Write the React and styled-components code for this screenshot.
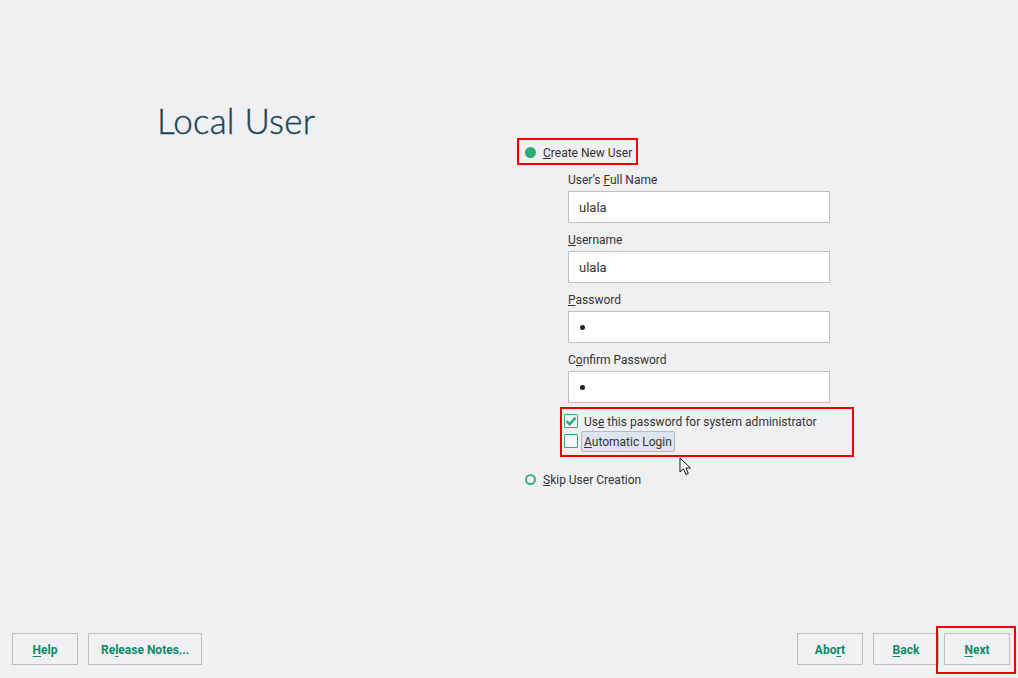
import React from 'react'

// Components
import styled, { createGlobalStyle } from 'styled-components'

const GlobalStyle = createGlobalStyle`
  html, body {
    margin: 0;
    padding: 0;
    background: #f0f0f3;
    font-family: Roboto, 'Liberation Sans', sans-serif;
    color: #333333;
  }
`

const Page = styled.div`
  position: relative;
  display: flex;
  flex-direction: column;
  height: 100vh;
  overflow: hidden;
`

const Main = styled.main`
  flex: 1;
  display: flex;
  align-items: flex-start;
`

const Title = styled.h1`
  margin: 100px 0 0 157px;
  width: 360px;
  font-family: Lato, 'Open Sans', sans-serif;
  font-weight: 300;
  font-size: 35px;
  line-height: 40px;
  letter-spacing: 0.2px;
  color: #1c4556;
  -webkit-text-stroke: 0.4px #1c4556;
`

const Form = styled.div`
  display: flex;
  flex-direction: column;
  align-items: flex-start;
  margin-top: 138px;
  font-size: 12px;
`

const RadioRow = styled.label`
  display: inline-flex;
  align-items: center;
  gap: 7px;
  box-sizing: border-box;
  height: 27px;
  padding: 1px 4px 0 6px;
  margin-top: ${p => p.gapTop || 0}px;
  border: 2px solid ${p => (p.marked ? '#ee0000' : 'transparent')};
  line-height: 16px;
`

const RadioText = styled.span`
  padding-top: 2px;
`

const RadioDot = styled.span`
  box-sizing: border-box;
  width: 11px;
  height: 11px;
  border-radius: 50%;
  background: ${p => (p.checked ? '#2aac72' : 'transparent')};
  border: 2px solid ${p => (p.checked ? '#2aac72' : '#38b486')};
`

const Fields = styled.div`
  display: flex;
  flex-direction: column;
  gap: 8px;
  margin: 6px 0 0 51px;
`

const Field = styled.div`
  display: flex;
  flex-direction: column;
`

const Label = styled.span`
  line-height: 16px;
  padding-top: 1px;
  margin-bottom: 3px;
`

const Input = styled.div`
  box-sizing: border-box;
  width: 262px;
  height: 32px;
  display: flex;
  align-items: center;
  padding: 1px 0 0 10px;
  background: #ffffff;
  border: 1px solid #bfbfbf;
  font-size: 13px;
  color: #333333;
`

const Dot = styled.span`
  display: block;
  width: 5px;
  height: 5px;
  margin-left: 1px;
  border-radius: 50%;
  background: #222222;
`

const CheckGroup = styled.div`
  box-sizing: border-box;
  width: 294px;
  margin: 4px 0 0 43px;
  padding: 2px 0 4px 2px;
  border: 2px solid #ee0000;
`

const CheckRow = styled.label`
  display: flex;
  align-items: center;
  gap: 6px;
  height: 20px;
`

const Box = styled.span`
  box-sizing: border-box;
  display: flex;
  align-items: center;
  justify-content: center;
  width: 14px;
  height: 14px;
  border: 1px solid #35a87c;
  border-radius: 1px;
  background: #f6f6f8;
`

const CheckText = styled.span`
  line-height: 16px;
  padding-top: 2px;
  ${p =>
    p.focused &&
    `
    margin-left: -3px;
    padding: 2px 2px 1px 2px;
    background: #dde5ee;
    border: 1px solid #a9bccc;
    border-radius: 2px;
  `}
`

const Footer = styled.footer`
  display: flex;
  justify-content: space-between;
  align-items: flex-end;
  padding: 0 2px 4px 12px;
`

const ButtonGroup = styled.div`
  display: flex;
  gap: 10px;
  padding-bottom: ${p => p.bottom || 0}px;
`

const Right = styled.div`
  display: flex;
  align-items: flex-end;
`

const Button = styled.button`
  box-sizing: border-box;
  min-width: 66px;
  height: 32px;
  padding: 2px 12px 0;
  background: #f0f0f3;
  border: 1px solid #bdbdbd;
  font-family: Roboto, 'Liberation Sans', sans-serif;
  font-weight: 700;
  font-size: 12px;
  color: #0b8a6b;
  cursor: pointer;

  u {
    text-underline-offset: 2px;
  }
`

const NextMark = styled.div`
  margin-left: -3px;
  padding: 5px 4px 7px 6px;
  border: 2px solid #ee0000;
`

const Pointer = styled.svg`
  position: absolute;
  left: 679px;
  top: 457px;
`

const fields = [
  { label: ['User\u2019s ', 'F', 'ull Name'], value: 'ulala' },
  { label: ['', 'U', 'sername'], value: 'ulala' },
  { label: ['', 'P', 'assword'], secret: true },
  { label: ['C', 'o', 'nfirm Password'], secret: true },
]

const Mnemonic = ({ parts }) => (
  <>
    {parts[0]}
    <u>{parts[1]}</u>
    {parts[2]}
  </>
)

export default function App() {
  return (
    <Page>
      <GlobalStyle />
      <Main>
        <Title>Local User</Title>
        <Form>
          <RadioRow marked>
            <RadioDot checked />
            <RadioText>
              <u>C</u>reate New User
            </RadioText>
          </RadioRow>
          <Fields>
            {fields.map((f, i) => (
              <Field key={i}>
                <Label>
                  <Mnemonic parts={f.label} />
                </Label>
                <Input>{f.secret ? <Dot /> : f.value}</Input>
              </Field>
            ))}
          </Fields>
          <CheckGroup>
            <CheckRow>
              <Box>
                <svg width="12" height="12" viewBox="0 0 12 12">
                  <path d="M1.5 6.2 L4.6 9.2 L10.6 2.6" fill="none" stroke="#2aa873" strokeWidth="2.4" />
                </svg>
              </Box>
              <CheckText>
                Us<u>e</u> this password for system administrator
              </CheckText>
            </CheckRow>
            <CheckRow>
              <Box />
              <CheckText focused>
                <u>A</u>utomatic Login
              </CheckText>
            </CheckRow>
          </CheckGroup>
          <RadioRow gapTop={8}>
            <RadioDot />
            <RadioText>
              <u>S</u>kip User Creation
            </RadioText>
          </RadioRow>
        </Form>
      </Main>
      <Footer>
        <ButtonGroup bottom={9}>
          <Button>
            <u>H</u>elp
          </Button>
          <Button>
            Re<u>l</u>ease Notes...
          </Button>
        </ButtonGroup>
        <Right>
          <ButtonGroup bottom={9}>
            <Button>
              Abo<u>r</u>t
            </Button>
            <Button>
              <u>B</u>ack
            </Button>
          </ButtonGroup>
          <NextMark>
            <Button>
              <u>N</u>ext
            </Button>
          </NextMark>
        </Right>
      </Footer>
      <Pointer width="14" height="20" viewBox="0 0 14 20">
        <path
          d="M1 1 L1 15 L4.5 11.8 L7 17.5 L9.3 16.5 L6.9 11 L11.5 11 Z"
          fill="#ffffff"
          stroke="#111111"
          strokeWidth="1"
          strokeLinejoin="round"
        />
      </Pointer>
    </Page>
  )
}
